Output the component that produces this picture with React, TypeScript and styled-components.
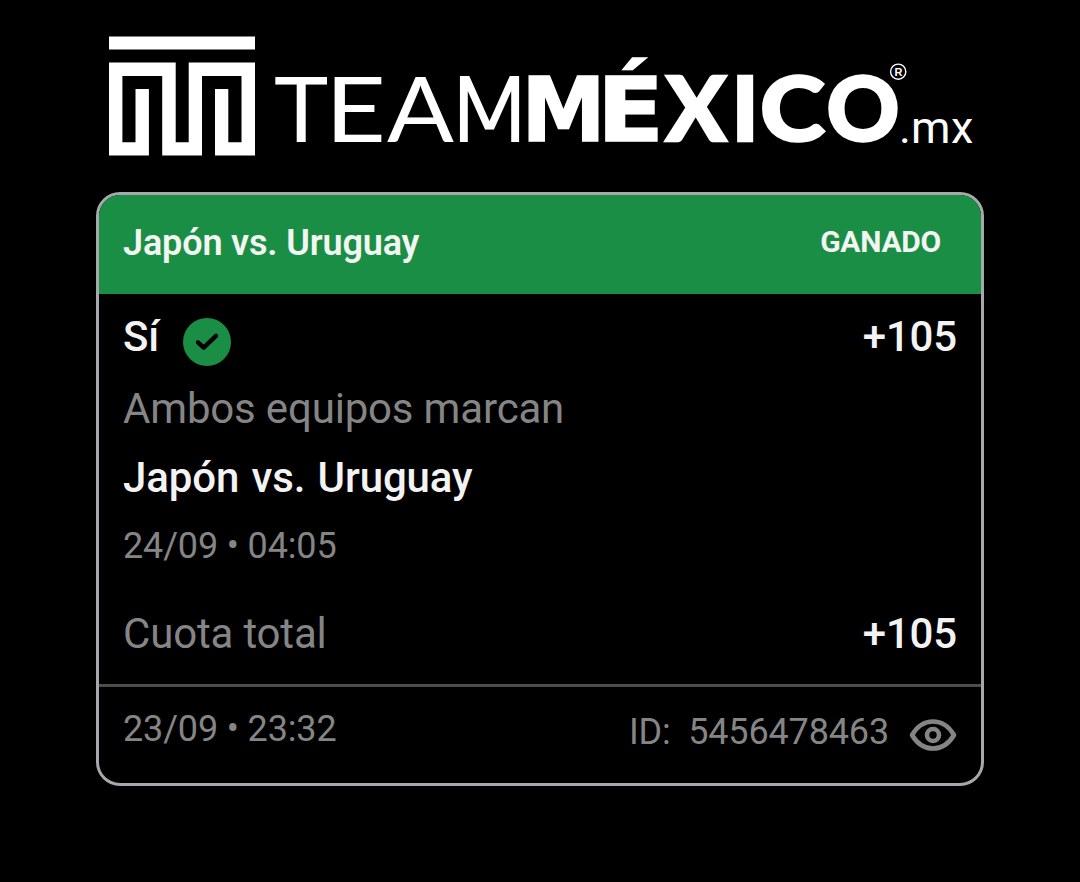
import React from "react";
import styled, { createGlobalStyle } from "styled-components";

const GlobalStyle = createGlobalStyle`
  * {
    box-sizing: border-box;
  }

  body {
    background-color: #000000;
    margin: 0;
  }
`;

const Page = styled.main`
  background-color: #000000;
  display: flex;
  flex-direction: column;
  font-family: Roboto, "Liberation Sans", sans-serif;
  height: 882px;
  overflow: hidden;
  padding: 0 96px;
  width: 1080px;
`;

const LogoSvg = styled.svg`
  display: block;
  flex: none;
  height: 192px;
  width: 888px;
`;

const LogoLight = styled.text`
  fill: #ffffff;
  font-family: Lato, sans-serif;
  font-size: 92px;
  font-weight: 400;
`;

const LightM = styled.tspan`
  font-family: "DejaVu Sans", sans-serif;
  font-size: 88px;
  font-weight: 200;
  stroke: #ffffff;
  stroke-width: 2.2;
`;

const LogoHeavy = styled.text`
  fill: #ffffff;
  font-family: Lato, sans-serif;
  font-size: 90px;
  font-weight: 900;
  stroke: #ffffff;
  stroke-width: 2.4;
`;

const HeavySquare = styled.tspan`
  font-family: "DejaVu Sans", sans-serif;
  font-size: 89px;
  font-weight: 700;
  stroke-width: 1.5;
`;

const LogoDomain = styled.text`
  fill: #ffffff;
  font-family: Roboto, sans-serif;
  font-size: 45px;
  font-weight: 450;
`;

const LogoMark = styled.text`
  fill: #ffffff;
  font-family: "Liberation Sans", sans-serif;
  font-size: 11px;
  font-weight: 700;
  text-anchor: middle;
`;

const Ticket = styled.article`
  border: 3px solid #a6a8ad;
  border-radius: 24px;
  height: 594px;
  overflow: hidden;
`;

const TicketHeader = styled.header`
  align-items: flex-start;
  background-color: #1b8e45;
  color: #f3f5f3;
  display: flex;
  height: 99px;
  justify-content: space-between;
  line-height: 42px;
  padding: 26px 40px 0 24px;
`;

const Title = styled.h1`
  font-size: 36px;
  font-weight: 600;
  letter-spacing: -0.16px;
  line-height: 42px;
  margin: 1px 0 0;
`;

const Status = styled.span`
  font-size: 30px;
  font-weight: 700;
  letter-spacing: -0.25px;
`;

const TicketBody = styled.section`
  border-bottom: 3px solid #4d4d4d;
  height: 393px;
  padding: 19px 24px 0;
`;

const Row = styled.div`
  align-items: flex-start;
  display: flex;
  height: 48px;
  justify-content: space-between;
`;

const Pick = styled.div`
  align-items: flex-start;
  display: flex;
  gap: 24px;
`;

interface TextProps {
  $strong?: boolean;
}

const Text = styled.span<TextProps>`
  color: ${props => (props.$strong ? "#f3f3f3" : "#858585")};
  display: block;
  font-size: 42px;
  font-weight: ${props => (props.$strong ? 500 : 400)};
  letter-spacing: -0.17px;
  line-height: 48px;
`;

const Market = styled(Text)`
  margin-top: 24px;
`;

const Match = styled(Text)`
  letter-spacing: -0.12px;
  margin-top: 21px;
  word-spacing: 2px;
`;

const SmallText = styled.span`
  color: #858585;
  display: block;
  font-size: 36px;
  letter-spacing: -0.15px;
  line-height: 42px;
  white-space: pre;
`;

const Kickoff = styled(SmallText)`
  margin: 23px 0 43px;
`;

const CheckIcon = styled.svg`
  display: block;
  height: 48px;
  margin-top: 5px;
  width: 48px;
`;

const TicketFooter = styled.footer`
  align-items: flex-start;
  display: flex;
  justify-content: space-between;
  padding: 21px 24px 0;
`;

const TicketId = styled.div`
  display: flex;
  gap: 20px;
  margin-top: 3px;
`;

const EyeIcon = styled.svg`
  display: block;
  height: 48px;
  width: 48px;
`;

const Logo = () => (
  <LogoSvg viewBox="96 0 888 192">
    <g fill="#ffffff">
      <path d="M109 36.5h146v13H109z" />
      <path d="M109 62.5h66.7v79.8h13V62.5H255v93h-40V89h13.3v53.3h13.2V76H202v79.5h-39.8V76h-39.8v66.3h13.1V89h13.4v66.5H109z" />
    </g>
    <LogoLight y="142">
      <tspan x="274">T</tspan>
      <tspan x="325" textLength="61" lengthAdjust="spacingAndGlyphs">E</tspan>
      <tspan x="387" textLength="67" lengthAdjust="spacingAndGlyphs">A</tspan>
      <LightM x="444.5" y="141" textLength="90" lengthAdjust="spacingAndGlyphs">M</LightM>
    </LogoLight>
    <LogoHeavy y="141.3">
      <HeavySquare x="521.5" textLength="84" lengthAdjust="spacingAndGlyphs">M</HeavySquare>
      <HeavySquare x="596.9" textLength="67" lengthAdjust="spacingAndGlyphs">É</HeavySquare>
      <tspan x="665.5 731.5">XI</tspan>
      <tspan x="760" textLength="65" lengthAdjust="spacingAndGlyphs">C</tspan>
      <tspan x="826.500">O</tspan>
    </LogoHeavy>
    <LogoDomain x="899 911 951" y="143">
      .mx
    </LogoDomain>
    <circle cx="898.2" cy="71.7" r="7.6" fill="none" stroke="#ffffff" strokeWidth="1.4" />
    <LogoMark x="898.4" y="75.5">
      R
    </LogoMark>
  </LogoSvg>
);

const App = () => (
  <>
    <GlobalStyle />
    <Page>
      <Logo />
      <Ticket>
        <TicketHeader>
          <Title>Japón vs. Uruguay</Title>
          <Status>GANADO</Status>
        </TicketHeader>
        <TicketBody>
          <Row>
            <Pick>
              <Text $strong>Sí</Text>
              <CheckIcon viewBox="0 0 48 48">
                <circle cx="24" cy="24" r="24" fill="#1b8e45" />
                <path
                  d="M15 24.3l5.7 5.3L33 17.9"
                  fill="none"
                  stroke="#000000"
                  strokeLinecap="round"
                  strokeLinejoin="round"
                  strokeWidth={4.4}
                />
              </CheckIcon>
            </Pick>
            <Text $strong>+105</Text>
          </Row>
          <Market>Ambos equipos marcan</Market>
          <Match $strong>Japón vs. Uruguay</Match>
          <Kickoff>24/09 • 04:05</Kickoff>
          <Row>
            <Text>Cuota total</Text>
            <Text $strong>+105</Text>
          </Row>
        </TicketBody>
        <TicketFooter>
          <SmallText>23/09 • 23:32</SmallText>
          <TicketId>
            <SmallText>{"ID:  5456478463"}</SmallText>
            <EyeIcon viewBox="0 0 48 48" fill="none" stroke="#858585">
              <path
                d="M3 24C8 15.500 15.500 10.500 24 10.500S40 15.500 45 24C40 32.500 32.500 37.500 24 37.500S8 32.500 3 24z"
                strokeLinejoin="round"
                strokeWidth={4.6}
              />
              <circle cx="24" cy="24" r="6" strokeWidth={4.6} />
            </EyeIcon>
          </TicketId>
        </TicketFooter>
      </Ticket>
    </Page>
  </>
);

export default App;
